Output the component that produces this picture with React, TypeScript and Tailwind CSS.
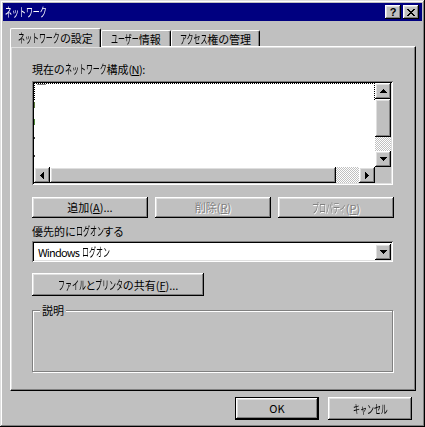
import React from "react";

const raised =
  "shadow-[inset_-1px_-1px_0_#000,inset_1px_1px_0_#fff,inset_-2px_-2px_0_#808080,inset_2px_2px_0_#dfdfdf]";
const sunken =
  "shadow-[inset_1px_1px_0_#808080,inset_-1px_-1px_0_#fff,inset_2px_2px_0_#000,inset_-2px_-2px_0_#dfdfdf]";
const checker =
  "bg-[image:repeating-conic-gradient(#c0c0c0_0_25%,#ffffff_0_50%)] bg-[length:2px_2px]";

// katakana in the old UI font are drawn narrow: squeeze full-width glyphs
// and give back the space they no longer use
function K({ t }: { t: string }) {
  const squeeze = 12 * t.length * (1 - 0.58);
  return (
    <span
      className="inline-block text-[12px] [font-feature-settings:normal] scale-x-[0.58] origin-left"
      style={{ marginRight: -squeeze }}
    >
      {t}
    </span>
  );
}

type Dir = "up" | "down" | "left" | "right";

function Arrow({ dir }: { dir: Dir }) {
  // pixel triangle, 7x4 (or 4x7 sideways)
  const rows = [
    [3, 1],
    [2, 3],
    [1, 5],
    [0, 7],
  ];
  const horizontal = dir === "left" || dir === "right";
  return (
    <svg width={horizontal ? 4 : 7} height={horizontal ? 7 : 4} shapeRendering="crispEdges">
      {rows.map(([o, w], i) => {
        if (dir === "up") return <rect key={i} x={o} y={i} width={w} height={1} fill="#000" />;
        if (dir === "down") return <rect key={i} x={o} y={3 - i} width={w} height={1} fill="#000" />;
        if (dir === "left") return <rect key={i} x={i} y={o} width={1} height={w} fill="#000" />;
        return <rect key={i} x={3 - i} y={o} width={1} height={w} fill="#000" />;
      })}
    </svg>
  );
}

function ScrollButton({ dir }: { dir: Dir }) {
  return (
    <div className={`w-[16px] h-[16px] shrink-0 bg-[#c0c0c0] flex items-center justify-center ${raised}`}>
      <Arrow dir={dir} />
    </div>
  );
}

function Button({
  children,
  className = "",
  disabled = false,
  isDefault = false,
}: {
  children: React.ReactNode;
  className?: string;
  disabled?: boolean;
  isDefault?: boolean;
}) {
  const text = disabled ? "text-[#808080] [text-shadow:1px_1px_0_#fff]" : "text-black";
  if (isDefault) {
    return (
      <div className={`border border-black ${className}`}>
        <div className={`w-full h-full flex items-center justify-center bg-[#c0c0c0] ${raised} ${text}`}>{children}</div>
      </div>
    );
  }
  return (
    <div className={`flex items-center justify-center whitespace-nowrap bg-[#c0c0c0] ${raised} ${text} ${className}`}>
      <span>{children}</span>
    </div>
  );
}

function Tab({ children, selected = false, width }: { children: React.ReactNode; selected?: boolean; width: string }) {
  if (selected) {
    return (
      <div
        className={`${width} h-[19px] -mb-[1px] relative z-10 bg-[#c0c0c0] border-t border-l border-r border-t-white border-l-white border-r-black rounded-t-[2px] shadow-[inset_-1px_0_0_#808080] pt-[2px] leading-[14px] whitespace-nowrap text-center`}
      >
        {children}
      </div>
    );
  }
  return (
    <div
      className={`${width} h-[16px] bg-[#c0c0c0] border-t border-l border-r border-t-white border-l-white border-r-black rounded-t-[2px] shadow-[inset_-1px_0_0_#808080] pt-[1px] leading-[14px] whitespace-nowrap text-center`}
    >
      {children}
    </div>
  );
}

export default function App() {
  return (
    <div
      className={`w-[425px] h-[427px] bg-[#c0c0c0] p-[3px] flex flex-col text-[11px] text-black font-['Noto_Sans_CJK_JP',sans-serif] [font-feature-settings:'palt'] shadow-[inset_-1px_-1px_0_#000,inset_1px_1px_0_#dfdfdf,inset_-2px_-2px_0_#808080,inset_2px_2px_0_#fff]`}
    >
      {/* title bar */}
      <div className="h-[18px] bg-[#000080] flex items-center pl-[2px] pr-[3px]">
        <span className="text-white leading-[14px]">
          <K t="ネットワーク" />
        </span>
        <div className="ml-auto flex gap-[2px]">
          <div className={`w-[16px] h-[14px] bg-[#c0c0c0] flex items-center justify-center ${raised}`}>
            <span className="font-['Liberation_Sans',sans-serif] font-bold text-[11px] leading-none">?</span>
          </div>
          <div className={`w-[16px] h-[14px] bg-[#c0c0c0] flex items-center justify-center ${raised}`}>
            <svg width="8" height="7" shapeRendering="crispEdges">
              <path d="M0 0h2v1h-2zM6 0h2v1h-2zM1 1h2v1h-2zM5 1h2v1h-2zM2 2h4v1h-4zM3 3h2v1h-2zM2 4h4v1h-4zM1 5h2v1h-2zM5 5h2v1h-2zM0 6h2v1h-2zM6 6h2v1h-2z" fill="#000" />
            </svg>
          </div>
        </div>
      </div>

      {/* tabs */}
      <div className="flex items-end h-[18px] mt-[7px] ml-[7px]">
        <Tab selected width="w-[91px]">
          <K t="ネットワーク" />の設定
        </Tab>
        <Tab width="w-[70px]">
          <K t="ユーザー" />情報
        </Tab>
        <Tab width="w-[89px]">
          <K t="アクセス" />権の管理
        </Tab>
      </div>

      {/* tab panel */}
      <div className="ml-[7px] w-[406px] h-[345px] border-t border-l border-r border-b border-t-white border-l-white border-r-black border-b-black shadow-[inset_-1px_-1px_0_#808080,inset_1px_1px_0_#dfdfdf] pt-[15px] pl-[21px] pr-[21px] flex flex-col">
        <div className="h-[14px] leading-[14px] whitespace-nowrap">
          現在の<K t="ネットワーク" />構成<span className="tracking-[-0.5px]">(<span className="underline">N</span>):</span>
        </div>

        {/* list box */}
        <div className={`mt-[5px] w-[361px] h-[104px] bg-white p-[2px] flex flex-col ${sunken}`}>
          <div className="flex flex-1">
            <div className="flex-1 relative">
              <div className="h-[17px] border border-dotted border-black border-b-0" />
              <div className="absolute left-[3px] top-[1px] w-[9px] h-[1px] bg-[#808080]" />
              <div className="absolute left-0 top-[19px] w-[1px] h-[6px] bg-[#5a7a3a]" />
              <div className="absolute left-0 top-[36px] w-[1px] h-[6px] bg-[#4f8a3a]" />
              <div className="absolute left-0 top-[54px] w-[1px] h-[2px] bg-[#404040]" />
              <div className="absolute left-0 top-[72px] w-[1px] h-[2px] bg-[#404040]" />
            </div>
            <div className="w-[16px] flex flex-col">
              <ScrollButton dir="up" />
              <div className={`h-[38px] bg-[#c0c0c0] ${raised}`} />
              <div className={`flex-1 ${checker}`} />
              <ScrollButton dir="down" />
            </div>
          </div>
          <div className="flex h-[16px]">
            <ScrollButton dir="left" />
            <div className={`w-[286px] bg-[#c0c0c0] ${raised}`} />
            <div className={`flex-1 ${checker}`} />
            <ScrollButton dir="right" />
            <div className="w-[16px] bg-[#c0c0c0]" />
          </div>
        </div>

        {/* action buttons */}
        <div className="mt-[12px] flex justify-between h-[21px]">
          <Button className="w-[116px]">
            追加(<span className="underline">A</span>)...
          </Button>
          <Button className="w-[116px]" disabled>
            削除(<span className="underline">R</span>)
          </Button>
          <Button className="w-[116px]" disabled>
            <K t="プロパティ" />(<span className="underline">P</span>)
          </Button>
        </div>

        <div className="mt-[6px] h-[14px] leading-[14px]">
          優先的に<K t="ログオン" />する
        </div>

        {/* combo box */}
        <div className={`mt-[3px] w-[361px] h-[21px] bg-white p-[2px] flex items-center ${sunken}`}>
          <span className="pl-[4px] leading-[14px]">
            <span className="tracking-[-0.8px]">Windows</span> <K t="ログオン" />
          </span>
          <div className="ml-auto">
            <ScrollButton dir="down" />
          </div>
        </div>

        <Button className="mt-[11px] w-[172px] h-[23px]">
          <K t="ファイル" />と<K t="プリンタ" />の共有(<span className="underline">F</span>)...
        </Button>

        {/* group box */}
        <div className="relative mt-[14px] w-[361px] h-[62px] border border-[#808080] shadow-[inset_1px_1px_0_#fff,1px_1px_0_#fff]">
          <span className="absolute -top-[8px] left-[7px] px-[2px] bg-[#c0c0c0] leading-[14px]">説明</span>
        </div>
      </div>

      {/* dialog buttons */}
      <div className="mt-[6px] flex justify-end gap-[9px] pr-[10px]">
        <Button isDefault className="w-[84px] h-[23px]">
          OK
        </Button>
        <Button className="w-[84px] h-[23px]">
          <K t="キャンセル" />
        </Button>
      </div>
    </div>
  );
}
